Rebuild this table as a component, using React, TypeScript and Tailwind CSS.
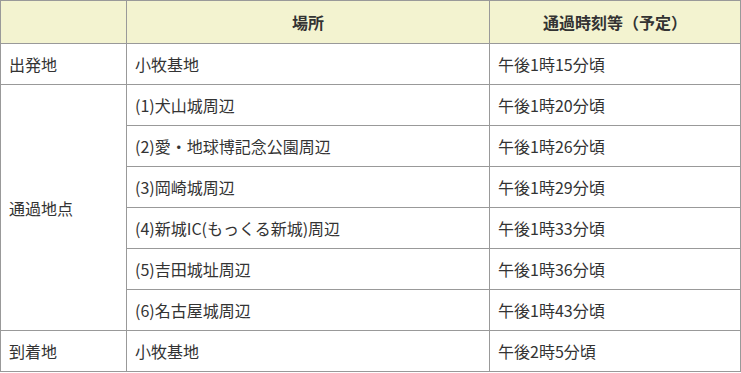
const rows: { place: string; time: string }[] = [
  { place: "(1)犬山城周辺", time: "午後1時20分頃" },
  { place: "(2)愛・地球博記念公園周辺", time: "午後1時26分頃" },
  { place: "(3)岡崎城周辺", time: "午後1時29分頃" },
  { place: "(4)新城IC(もっくる新城)周辺", time: "午後1時33分頃" },
  { place: "(5)吉田城址周辺", time: "午後1時36分頃" },
  { place: "(6)名古屋城周辺", time: "午後1時43分頃" },
];

const cell = "border border-[#999999] px-2 h-[41px] align-middle text-left font-normal";

export default function App() {
  return (
    <div className="bg-white w-[741px] h-[373px] text-[16px] text-[#333333] leading-normal" style={{ fontFamily: '"Noto Sans CJK JP", "Noto Sans", sans-serif' }}>
      <table className="table-fixed border-collapse w-[740px]">
        <colgroup>
          <col className="w-[126px]" />
          <col className="w-[363px]" />
          <col className="w-[251px]" />
        </colgroup>
        <thead>
          <tr className="bg-[#f3f3d0]">
            <th className="border border-[#999999] h-[43px]"></th>
            <th className="border border-[#999999] h-[43px] font-bold text-center">場所</th>
            <th className="border border-[#999999] h-[43px] font-bold text-center">通過時刻等（予定）</th>
          </tr>
        </thead>
        <tbody>
          <tr>
            <td className={cell}>出発地</td>
            <td className={cell}>小牧基地</td>
            <td className={cell}>午後1時15分頃</td>
          </tr>
          {rows.map((r, i) => (
            <tr key={r.place}>
              {i === 0 && (
                <td rowSpan={6} className={cell}>
                  通過地点
                </td>
              )}
              <td className={cell}>{r.place}</td>
              <td className={cell}>{r.time}</td>
            </tr>
          ))}
          <tr>
            <td className={cell}>到着地</td>
            <td className={cell}>小牧基地</td>
            <td className={cell}>午後2時5分頃</td>
          </tr>
        </tbody>
      </table>
    </div>
  );
}
